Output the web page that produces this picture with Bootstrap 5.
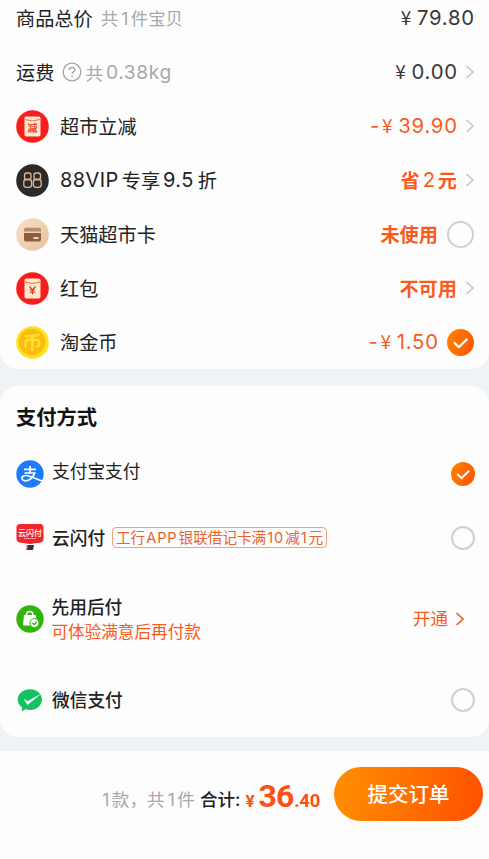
<!DOCTYPE html>
<html lang="zh-CN">
<head>
<meta charset="utf-8">
<meta name="viewport" content="width=device-width, initial-scale=1">
<title>确认订单</title>
<link href="https://cdn.jsdelivr.net/npm/bootstrap@5.3.0/dist/css/bootstrap.min.css" rel="stylesheet">
<style>
body{background:#eff3f6;font-family:Inter,"Noto Sans CJK SC",sans-serif;font-size:19.2px;line-height:1;color:#222;min-height:859px;overflow:hidden}
.defs{position:absolute;width:0;height:0}
.panel{background:#fdfdfd;border-radius:0 0 18px 18px;padding:0 15px 0 16px;height:369px}
.pay{border-radius:18px;height:351px;margin-top:17px;padding-left:16px}
.line{height:54px;white-space:nowrap}
.line.first{height:36px;margin-bottom:9px}
.lbl{padding-top:3px}
.ico{width:33px;height:33px;margin-right:11px;flex:none}
.pico{width:28px;height:28px;margin-right:8px;flex:none}
.muted{color:#a8a8a8;font-weight:400}
.count{font-size:17.4px;margin-left:8px;padding-top:1px}
.wide{letter-spacing:2.5px;padding-left:3px}
.help{width:20px;height:20px;margin:0 3px 0 8px;stroke:#a3a3a3;stroke-width:1.3;fill:none}
.kg{margin-left:3px;letter-spacing:.6px;padding-top:1px}
.num{font-size:20.3px;color:#383838;letter-spacing:.75px;margin-right:-.75px}
.yen{font-family:"Noto Sans CJK SC",sans-serif;display:inline-block;font-size:19px;line-height:1;margin-right:5px}
.minus{margin-right:2px}
.vip{font-size:20px;letter-spacing:.4px}
.mid{margin:0 3px}
.num.mid{margin:0 2px 0 3px}
.org,.num.org{color:#fa5a1c}
.bold{font-weight:700}
.s175{font-size:17.6px}
.s165{font-size:16.6px}
.chev{width:9px;height:14px;margin-left:8px;flex:none}
.chev.go{margin:0 10px 0 7px}
.gray{color:#c8c8c8}
.ring{width:27px;height:27px;border:2px solid #d0d0d0;border-radius:50%;margin:0 0 0 9px;flex:none}
.ring.sm,.tick.sm{width:24px;height:24px;margin-right:-1px}
.tick{width:27px;height:27px;margin:0 0 0 9px;flex:none}
.title{height:60px;font-size:20.3px;color:#111;padding-top:4px}
.pl{font-size:17.7px;padding-top:2px}
.med{font-weight:500}
.up{padding:0 0 3px}
.two{gap:7px;margin-left:-.5px}
.r1{height:55px}.r2{height:73px}.r3{height:89px}.r4{height:74px}
.promo{border:1px solid #f0a27c;border-radius:4px;height:21px;width:215px;margin-left:7px;color:#e8632f;font-size:14.6px;padding-top:1px}
.promo i{font-style:normal;letter-spacing:.9px;padding:0 1px}
.bar{background:#fdfdfd;height:108px;margin-top:14px;padding:16px 6px 0 0}
.barrow{height:54px}
.qty{padding-top:11px}
.total{padding-top:11px;margin-left:5px;font-size:17.6px}
.submit{width:149px;height:54px;border:0;background:linear-gradient(100deg,#ff9000,#ff5000)!important;color:#fff!important;font-size:20.5px;font-weight:500;padding:2px 0 0;margin-left:14px}
.sum{color:#fa5214;font-family:Roboto,sans-serif;font-weight:700;margin-left:5px;padding-top:4px}
.sum .yen{font-family:Roboto,sans-serif;font-size:17px;margin-right:4px}
.big{font-size:32px;letter-spacing:-1px}.cents{font-size:18.5px;letter-spacing:-.3px;margin-left:1px}
</style>
</head>
<body>
<svg class="defs">
<defs>
<linearGradient id="og" x1="0" x2="1" y1="0" y2=".4"><stop stop-color="#ff8500"/><stop offset="1" stop-color="#ff5a00"/></linearGradient>
<linearGradient id="sand" x1="0" x2="1" y1="0" y2="1"><stop stop-color="#f7e2c8"/><stop offset="1" stop-color="#e2c29c"/></linearGradient>
</defs>
<symbol id="chev" viewBox="0 0 9 14"><path d="M1.500 1l6.500 6-6.500 6" fill="none" stroke="currentColor" stroke-width="1.600"/></symbol>
<symbol id="tick" viewBox="0 0 27 27"><circle cx="13.500" cy="13.500" r="13.500" fill="url(#og)"/><path d="M7.600 14l4.200 4.200 8-7.800" fill="none" stroke="#fff" stroke-width="2.200" stroke-linecap="round" stroke-linejoin="round"/></symbol>
</svg>

<section class="panel">
  <div class="line first d-flex align-items-center">
    <span class="lbl">商品总价</span><span class="muted count">共<span class="wide">1</span>件宝贝</span>
    <span class="num ms-auto"><span class="yen">¥</span>79.80</span>
  </div>
  <div class="line d-flex align-items-center">
    <span class="lbl">运费</span>
    <svg class="help" viewBox="0 0 20 20"><circle cx="10" cy="10" r="8.800"/><path d="M7.200 8c0-3.600 5.700-3.500 5.700-.2 0 2-2.800 2-2.800 4.300M10.100 13.600v1.600"/></svg>
    <span class="lbl muted s175">共</span><span class="muted kg">0.38kg</span>
    <span class="num ms-auto"><span class="yen">¥</span>0.00</span>
    <svg class="chev gray"><use href="#chev"/></svg>
  </div>
  <div class="line d-flex align-items-center">
    <svg class="ico" viewBox="0 0 33 33"><circle cx="16.500" cy="16.500" r="16.300" fill="#fa1d1d"/><rect x="8.500" y="6.500" width="16" height="20" rx="1.800" fill="#fde9cc"/><path d="M9 9.500q7.500 3 15 0" fill="none" stroke="#f26b50" stroke-width="1"/><text x="16.500" y="21.500" font-size="10" font-weight="700" text-anchor="middle" fill="#e8402c">减</text></svg>
    <span class="lbl">超市立减</span>
    <span class="num org ms-auto"><span class="minus">-</span><span class="yen">¥</span>39.90</span>
    <svg class="chev gray"><use href="#chev"/></svg>
  </div>
  <div class="line d-flex align-items-center">
    <svg class="ico" viewBox="0 0 33 33"><circle cx="16.500" cy="16.500" r="16.300" fill="#2b2929"/><g fill="none" stroke="#e3b694" stroke-width="1.300"><rect x="8.500" y="9" width="6.500" height="6.500" rx="2.200"/><rect x="7.800" y="15.500" width="7.800" height="7.800" rx="2.500"/><rect x="18" y="9" width="6.500" height="6.500" rx="2.200"/><rect x="17.400" y="15.500" width="7.800" height="7.800" rx="2.500"/></g></svg>
    <span class="vip">88VIP</span><span class="lbl mid">专享</span><span class="vip">9.5</span><span class="lbl ms-1">折</span>
    <span class="lbl org bold ms-auto">省</span><span class="num org mid">2</span><span class="lbl org bold">元</span>
    <svg class="chev gray"><use href="#chev"/></svg>
  </div>
  <div class="line d-flex align-items-center">
    <svg class="ico" viewBox="0 0 33 33"><circle cx="16.500" cy="16.500" r="16.300" fill="url(#sand)"/><path d="M8 13.500v-1.700q0-2 2-2h13q2 0 2 2v1.700z" fill="#b98a68"/><path d="M8 15h17v6.500q0 2-2 2H10q-2 0-2-2z" fill="#8f5c40"/><rect x="17.500" y="19" width="5" height="2" fill="#f3d9bd"/></svg>
    <span class="lbl">天猫超市卡</span>
    <span class="lbl org bold ms-auto">未使用</span><span class="ring"></span>
  </div>
  <div class="line d-flex align-items-center">
    <svg class="ico" viewBox="0 0 33 33"><circle cx="16.500" cy="16.500" r="16.300" fill="#fa1d1d"/><rect x="8.500" y="6.500" width="16" height="20" rx="1.800" fill="#fde9cc"/><path d="M9 10q7.500 3 15 0" fill="none" stroke="#f26b50" stroke-width="1"/><path d="M13.500 14.500l3 3.500 3-3.500M16.500 18v4.500M13.800 18h5.400M13.800 20.200h5.400" fill="none" stroke="#d8392a" stroke-width="1.200"/></svg>
    <span class="lbl">红包</span>
    <span class="lbl org bold ms-auto">不可用</span>
    <svg class="chev gray"><use href="#chev"/></svg>
  </div>
  <div class="line d-flex align-items-center">
    <svg class="ico" viewBox="0 0 33 33"><circle cx="16.500" cy="16.500" r="16.300" fill="#ffe11a"/><circle cx="16" cy="16" r="13.200" fill="#fbbb12"/><path d="M9.500 10.200q7-.2 13.500-1.500M9.500 20.500v-4q0-2.500 2.500-2.500h8.500q2.500 0 2.500 2.500v2q0 2-2 2M16.300 10.500V24.500" fill="none" stroke="#ffe32a" stroke-width="2.500" stroke-linecap="round"/></svg>
    <span class="lbl">淘金币</span>
    <span class="num org ms-auto"><span class="minus">-</span><span class="yen">¥</span>1.50</span>
    <svg class="tick"><use href="#tick"/></svg>
  </div>
</section>

<section class="panel pay">
  <div class="title bold d-flex align-items-center">支付方式</div>
  <div class="line r1 d-flex align-items-center">
    <svg class="pico" viewBox="0 0 28 28"><circle cx="14" cy="14" r="13.700" fill="#1f7bf8"/><path d="M8 9.300h12M14 6v7M8.500 13h10.200c-1.300 4-5 7.800-9 7.800-5.500 0-4.700-5.500.5-5.300 4.500.3 9 3.500 16 5.500" fill="none" stroke="#fff" stroke-width="1.700"/></svg>
    <span class="pl up">支付宝支付</span>
    <svg class="tick sm ms-auto"><use href="#tick"/></svg>
  </div>
  <div class="line r2 d-flex align-items-center">
    <svg class="pico" viewBox="0 0 28 28"><path d="M4 0h20q3.500 0 3.500 3.500v11q0 4-4 4.200L14 20 4.500 18.700Q.5 18.500.5 14.500v-11Q.5 0 4 0z" fill="#f2262b"/><text x="14" y="11.500" font-size="8" font-weight="500" text-anchor="middle" fill="#fff">云闪付</text><path d="M8 14.500h12" stroke="#ffb5b0" stroke-width="1.200" stroke-dasharray="1.500 .5"/><path d="M11.500 21h6.500l-1 5h-6.500z" fill="#333"/><path d="M10.500 21h2l-1 5h-1z" fill="#e54b40"/></svg>
    <span class="pl med">云闪付</span>
    <span class="promo d-flex align-items-center justify-content-center">工行<i>APP</i>银联借记卡满<i>10</i>减<i>1</i>元</span>
    <span class="ring sm ms-auto"></span>
  </div>
  <div class="line r3 d-flex align-items-center">
    <svg class="pico" viewBox="0 0 28 28"><circle cx="14" cy="14" r="13.700" fill="#35b30d"/><path d="M8 10h11.500l1 4.500v6H7z" fill="#fff"/><path d="M10.500 12V9.500q0-3 3.200-3t3.200 3V12" fill="none" stroke="#fff" stroke-width="1.500"/><circle cx="18.500" cy="18" r="4.500" fill="#fff" stroke="#35b30d"/><path d="M16.300 18l1.800 1.700 2.800-3" fill="none" stroke="#35b30d" stroke-width="1.300"/></svg>
    <div class="d-flex flex-column two"><span class="pl med">先用后付</span><span class="org s165">可体验满意后再付款</span></div>
    <span class="org s175 ms-auto">开通</span>
    <svg class="chev go org"><use href="#chev"/></svg>
  </div>
  <div class="line r4 d-flex align-items-center">
    <svg class="pico" viewBox="0 0 28 28"><path d="M14 3.300c6.800 0 12 4.500 12 10.200s-5.200 10.500-12 10.500q-2.500 0-4.500-.7L5.700 25.200l.4-3.800C3.200 19.400 1.700 16.500 1.700 13.500 1.700 7.800 7.200 3.300 14 3.300z" fill="#15c160"/><path d="M7.500 12.500l4 2.800L25.500 7.500 11.500 19z" fill="#fff"/></svg>
    <span class="pl med">微信支付</span>
    <span class="ring sm ms-auto"></span>
  </div>
</section>

<footer class="bar">
  <div class="barrow d-flex align-items-center justify-content-end text-nowrap">
    <span class="s175 muted qty"><span class="wide">1</span>款，共<span class="wide">1</span>件</span>
    <span class="total med">合计:</span>
    <span class="sum d-flex align-items-baseline"><span class="yen">¥</span><span class="big">36</span><span class="cents">.40</span></span>
    <button class="btn rounded-pill submit" type="button">提交订单</button>
  </div>
</footer>
<script src="https://cdn.jsdelivr.net/npm/bootstrap@5.3.0/dist/js/bootstrap.bundle.min.js"></script>
</body>
</html>
